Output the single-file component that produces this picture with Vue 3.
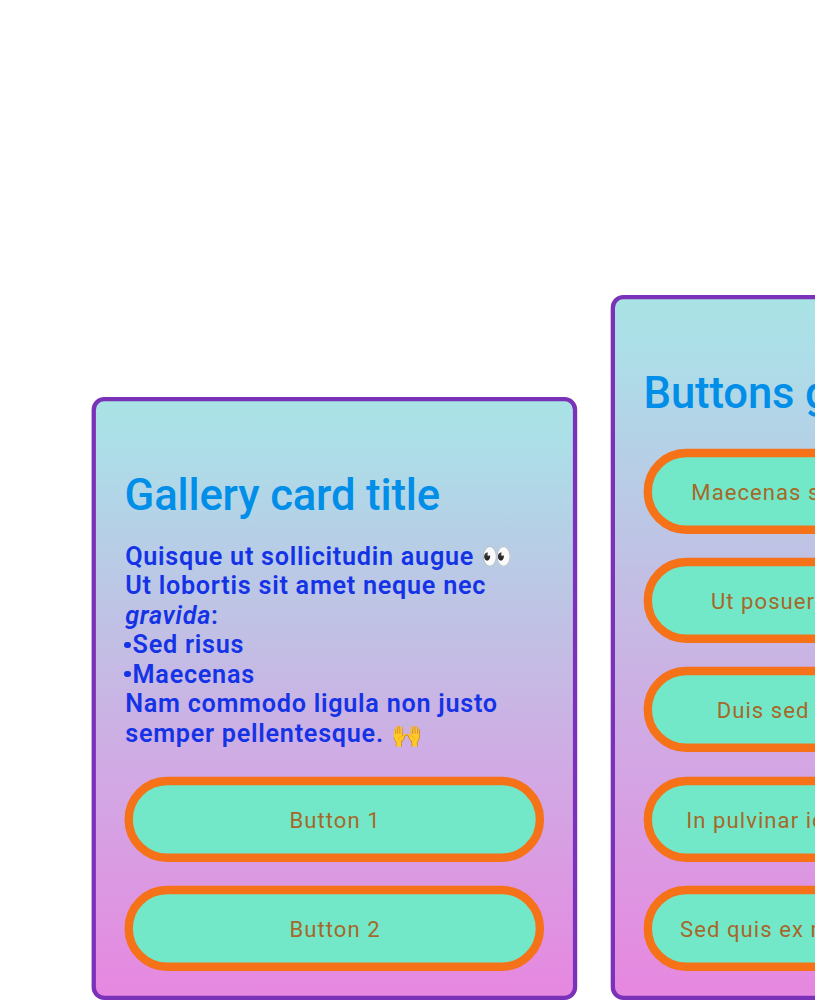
<script setup>
const gallery = ['Button 1', 'Button 2']
const actions = [
  'Maecenas sed diam eget risus',
  'Ut posuere dolor vitae diam',
  'Duis sed lorem sit amet',
  'In pulvinar id lectus vel odio',
  'Sed quis ex molestie lobortis'
]
</script>

<template>
  <main class="carousel">
    <section class="card">
      <div class="fill"></div>
      <svg class="frame"><rect class="card-line" x="2.75" y="2.15" width="481.3" height="598.7" rx="10.5" /></svg>
      <h2>Gallery card title</h2>
      <div class="copy">
        <div>Quisque ut sollicitudin augue <span class="emoji">👀</span></div>
        <div>Ut lobortis sit amet neque nec</div>
        <div><em>gravida</em>:</div>
        <div class="item"><i class="dot"></i>Sed risus</div>
        <div class="item"><i class="dot"></i>Maecenas</div>
        <div>Nam commodo ligula non justo</div>
        <div>semper pellentesque. <span class="emoji hands">🙌</span></div>
      </div>
      <div class="buttons">
        <button v-for="b in gallery" :key="b">
          <svg class="frame"><rect class="pill" x="4.7" y="4.0" width="411.2" height="76.8" rx="38.4" /></svg>
          <span>{{ b }}</span>
        </button>
      </div>
    </section>
    <section class="card tall">
      <div class="fill"></div>
      <svg class="frame"><rect class="card-line" x="2.85" y="2.15" width="481.3" height="700.7" rx="10.5" /></svg>
      <h2>Buttons gallery</h2>
      <div class="buttons">
        <button v-for="(b, i) in actions" :key="b" :class="'start b' + i">
          <svg class="frame"><rect class="pill" x="4.8" y="4.0" width="411.2" height="76.8" rx="38.4" /></svg>
          <span>{{ b }}</span>
        </button>
      </div>
    </section>
  </main>
</template>

<style>
html, body { margin: 0; background: #fff; overflow: hidden; }
</style>

<style scoped>
.carousel {
  box-sizing: border-box;
  width: 815px;
  height: 1000px;
  padding-left: 91px;
  display: flex;
  align-items: flex-end;
  gap: 33px;
  overflow: hidden;
  font-family: Roboto, "Liberation Sans", sans-serif;
}
.card {
  position: relative;
  box-sizing: border-box;
  flex: 0 0 486px;
  height: 603px;
  padding: 72.5px 33px 0;
}
.card.tall { height: 705px; }
.frame { position: absolute; left: 0; top: 0; width: 100%; height: 100%; overflow: visible; }
.card-line { fill: none; stroke: #7a33b8; stroke-width: 4.3; }
.fill {
  position: absolute;
  inset: 2px;
  border-radius: 10px;
  background: linear-gradient(#a9e3e4, #acdfe8 7%, #b8cce6 26%, #c2bfe4 40%, #d1a9e4 63%, #e787e0);
}
h2 {
  position: relative;
  margin: 0;
  height: 51px;
  line-height: 51px;
  font-size: 43.6px;
  font-weight: 500;
  letter-spacing: -0.15px;
  text-indent: 0.6px;
  color: #008ee8;
  white-space: nowrap;
}
.copy {
  position: relative;
  margin: 21px 0 0 1.2px;
  height: 206.5px;
  font-size: 25.2px;
  line-height: 29.5px;
  font-weight: 650;
  letter-spacing: 0.74px;
  color: #1533e6;
  white-space: nowrap;
}
.copy > div { height: 29.5px; }
.emoji { font-weight: 400; letter-spacing: 0; font-family: "Noto Color Emoji", sans-serif; }
.hands { position: relative; top: 1px; left: 1px; }
.item { display: flex; align-items: center; }
.dot { flex: none; width: 6.4px; height: 6.4px; margin: 0 2px 0 -1px; border-radius: 50%; background: #1533e6; }
.buttons {
  margin-top: 28.7px;
  display: flex;
  flex-direction: column;
  gap: 24.23px;
}
.tall .buttons { margin-top: 30.2px; }
button {
  position: relative;
  display: flex;
  align-items: center;
  justify-content: center;
  width: 420px;
  height: 85.1px;
  padding: 0;
  border: 0;
  background: none;
  font: 400 22.1px/27px Roboto, "Liberation Sans", sans-serif;
  letter-spacing: 1.04px;
  color: #a6682a;
  white-space: nowrap;
}
button span { position: relative; top: 1px; left: 1px; }
button.start { justify-content: flex-start; }
.pill { fill: #73e8c8; stroke: #f57219; stroke-width: 8.4; }
.b0 { padding-left: 47.3px; }
.b1 { padding-left: 66.9px; }
.b2 { padding-left: 72.7px; }
.b3 { padding-left: 42.3px; }
.b4 { padding-left: 36px; }
</style>
